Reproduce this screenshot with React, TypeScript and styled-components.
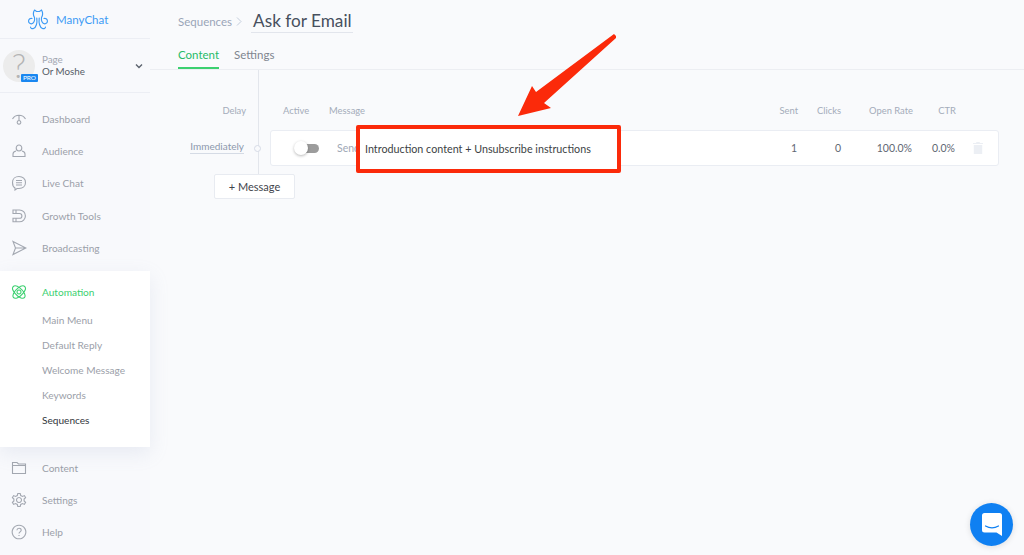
import React from "react";
import styled, { createGlobalStyle } from "styled-components";

const Global = createGlobalStyle`
  html, body { margin: 0; padding: 0; height: 100%; background: #f9fafc; }
  body { font-family: Lato, "Open Sans", "Liberation Sans", sans-serif; overflow: hidden; }
  #root { height: 100%; }
`;

const Page = styled.div`
  position: relative;
  display: flex;
  width: 1024px;
  height: 555px;
  overflow: hidden;
  background: #f9fafc;
`;

const Sidebar = styled.aside`
  width: 150px;
  flex: none;
  display: flex;
  flex-direction: column;
  background: #f8f9fc;
`;

const Brand = styled.div`
  height: 38px;
  display: flex;
  align-items: center;
  gap: 7px;
  padding-left: 27px;
  border-bottom: 1px solid #eceef4;
  color: #3d9bf5;
  font-size: 11.5px;
`;

const Account = styled.div`
  height: 53px;
  display: flex;
  align-items: center;
  padding-left: 3px;
  border-bottom: 1px solid #eceef4;
`;

const Avatar = styled.div`
  position: relative;
  width: 32px;
  height: 32px;
  border-radius: 50%;
  background: #ececec;
  color: #b4b4b4;
  display: flex;
  align-items: center;
  justify-content: center;
  font-size: 33px;
  font-weight: 300;
  line-height: 1;
  flex: none;
`;

const ProBadge = styled.span`
  position: absolute;
  right: -3px;
  bottom: 0;
  width: 17px;
  height: 8px;
  border-radius: 1px;
  background: #1a87f0;
  color: #fff;
  font-size: 6.5px;
  font-weight: 400;
  line-height: 8px;
  text-align: center;
`;

const AccountText = styled.div`
  margin-left: 7px;
  padding-bottom: 2px;
  flex: 1;
  display: flex;
  flex-direction: column;
  font-size: 9.8px;
  line-height: 12px;
`;

const AccountLabel = styled.span`
  color: #a3a8b2;
`;

const AccountName = styled.span`
  color: #565c66;
`;

const Chevron = styled.svg`
  width: 8px;
  height: 6px;
  margin-right: 7px;
  fill: none;
  stroke: #5c636e;
  stroke-width: 1.4;
`;

const NavGroup = styled.nav`
  display: flex;
  flex-direction: column;
  padding-top: 10px;
`;

const NavItem = styled.div<{ $green?: boolean }>`
  height: 32.2px;
  display: flex;
  align-items: center;
  padding-left: 11px;
  gap: 15px;
  font-size: 10.1px;
  color: ${(p) => (p.$green ? "#3cd070" : "#9ba0a9")};
  svg {
    width: 16px;
    height: 16px;
    flex: none;
    fill: none;
    stroke: ${(p) => (p.$green ? "#3cd070" : "#a2a7b0")};
    stroke-width: 1.1;
  }
`;

const ActiveBlock = styled.div`
  margin-top: 7px;
  height: 176px;
  padding-top: 5px;
  box-sizing: border-box;
  background: #fff;
  box-shadow: 0 6px 18px rgba(150, 160, 190, 0.16);
  position: relative;
`;

const SubNav = styled.div`
  display: flex;
  flex-direction: column;
  margin-top: -1px;
`;

const SubItem = styled.div<{ $current?: boolean }>`
  height: 25.2px;
  display: flex;
  align-items: center;
  padding-left: 42px;
  font-size: 10.1px;
  color: ${(p) => (p.$current ? "#33373d" : "#9ba0a9")};
`;

const LowerNav = styled.nav`
  display: flex;
  flex-direction: column;
  padding-top: 5px;
`;

const Main = styled.main`
  flex: 1;
  min-width: 0;
  display: flex;
  flex-direction: column;
`;

const Header = styled.header`
  height: 70px;
  box-sizing: border-box;
  padding: 10px 0 0 28px;
  border-bottom: 1px solid #eceef2;
`;

const Crumbs = styled.div`
  display: flex;
  align-items: center;
  height: 22px;
`;

const Crumb = styled.span`
  font-size: 11.5px;
  color: #9aa5b8;
`;

const CrumbArrow = styled.svg`
  width: 6px;
  height: 9px;
  margin: 0 9px 0 4px;
  fill: none;
  stroke: #c3ccdb;
  stroke-width: 1;
`;

const Title = styled.h1`
  margin: 0;
  padding: 0 1px 0 2px;
  font-size: 17.2px;
  font-weight: 400;
  line-height: 22px;
  color: #47505e;
  border-bottom: 1px solid #e2e5ec;
`;

const Tabs = styled.div`
  display: flex;
  gap: 15px;
  margin-top: 12px;
`;

const Tab = styled.div<{ $active?: boolean }>`
  height: 25px;
  box-sizing: border-box;
  padding-top: 4px;
  font-size: 11.5px;
  line-height: 14px;
  color: ${(p) => (p.$active ? "#27ba68" : "#7f858f")};
  border-bottom: ${(p) => (p.$active ? "2px solid #3cd070" : "none")};
`;

const Body = styled.section`
  position: relative;
  flex: 1;
  padding: 34px 25px 0 40px;
`;

const Timeline = styled.div`
  position: absolute;
  left: 108px;
  top: 0;
  width: 1px;
  height: 104px;
  background: #e3e6ec;
`;

const HeadRow = styled.div`
  display: grid;
  grid-template-columns: 56px 83px 1fr 43px 43px 72px 43px 43px;
  height: 14px;
  font-size: 9.4px;
  line-height: 14px;
  color: #a4acba;
`;

const HeadCell = styled.span<{ $align?: string; $inset?: number }>`
  text-align: ${(p) => p.$align || "left"};
  padding-left: ${(p) => p.$inset || 0}px;
`;

const Row = styled.div`
  display: flex;
  align-items: center;
  margin-top: 12px;
  height: 36px;
`;

const DelayLabel = styled.div`
  width: 54px;
  margin-bottom: 2px;
  font-size: 10px;
  line-height: 13px;
  color: #8c98ac;
  border-bottom: 1px solid #d5dbe5;
  text-align: right;
  flex: none;
`;

const Node = styled.span`
  width: 7px;
  height: 7px;
  box-sizing: border-box;
  border: 1.5px solid #d6dbe6;
  border-radius: 50%;
  background: #f9fafc;
  margin-left: 10px;
  flex: none;
  position: relative;
  z-index: 1;
`;

const Card = styled.div`
  margin-left: 9px;
  flex: 1;
  height: 36px;
  box-sizing: border-box;
  background: #fff;
  border: 1px solid #eaedf3;
  border-radius: 3px;
  display: grid;
  grid-template-columns: 66px 1fr 44px 71px 43px 43px;
  align-items: center;
  font-size: 10.5px;
  color: #5f6773;
`;

const SwitchTrack = styled.span`
  position: relative;
  width: 18px;
  height: 9px;
  margin-left: 30px;
  border-radius: 5px;
  background: #9c9c9c;
`;

const SwitchKnob = styled.span`
  position: absolute;
  left: -7px;
  top: -3px;
  width: 14px;
  height: 14px;
  border-radius: 50%;
  background: #fff;
  box-shadow: 0 1px 3px rgba(0, 0, 0, 0.28);
`;

const MessageName = styled.span`
  color: #a0a8b6;
  white-space: nowrap;
  overflow: hidden;
  width: 22px;
`;

const MessageCell = styled.div`
  display: flex;
  justify-content: space-between;
  align-items: center;
`;

const Stat = styled.span`
  text-align: right;
`;

const Trash = styled.svg`
  width: 10px;
  height: 12px;
  justify-self: end;
  margin-right: 15px;
  fill: #eceff4;
`;

const AddButton = styled.button`
  display: block;
  margin: 8px 0 0 24px;
  width: 81px;
  height: 25px;
  padding: 0;
  background: #fff;
  border: 1px solid #e8ebf1;
  border-radius: 2px;
  font: 400 11px Lato, sans-serif;
  color: #3f444c;
`;

const Highlight = styled.div`
  position: absolute;
  left: 356px;
  top: 125px;
  width: 265px;
  height: 48px;
  box-sizing: border-box;
  border: 4.5px solid #fb2a0a;
  border-radius: 2px;
  background: #fff;
  display: flex;
  align-items: center;
  padding: 0 0 1px 5px;
  font-size: 10.76px;
  color: #3c3f44;
  white-space: nowrap;
`;

const Arrow = styled.svg`
  position: absolute;
  left: 510px;
  top: 30px;
  width: 110px;
  height: 90px;
  fill: #fb2a0a;
`;

const ChatBubble = styled.div`
  position: absolute;
  right: 11px;
  bottom: 9px;
  width: 43px;
  height: 43px;
  border-radius: 50%;
  background: #0f80f2;
  box-shadow: 0 1px 6px rgba(0, 0, 0, 0.12);
  display: flex;
  align-items: center;
  justify-content: center;
  svg { width: 20px; height: 23px; }
`;

const Icon = ({ d }: { d: string }) => (
  <svg viewBox="0 0 16 16"><path d={d} /></svg>
);

const icons = {
  dashboard: "M1.500 8a7.500 7.500 0 0 1 13 0M8 4v5.500M8 9.500a1.800 1.800 0 1 0 .01 0",
  audience: "M5.200 5a2.800 3 0 1 1 5.600 0a2.800 3 0 1 1-5.600 0M5 8c-2 .5-3 1.500-3 3v2.500h12V11c0-1.500-1-2.500-3-3",
  chat: "M8 1.500c3.800 0 6.500 2.500 6.500 6s-2.700 6-6.500 6H6l-2 1.500v-2C2.300 12 1.500 10 1.500 7.500c0-3.500 2.700-6 6.500-6M5 5.500h6M5 7.800h6M5 10h6",
  growth: "M2 2h6.500a5.800 5.800 0 0 1 0 11.800H2v-3.500h6.500a2.300 2.300 0 0 0 0-4.800H2zM5 2v3.500M5 10.300v3.500",
  broadcast: "M2 1.500l13 6.500-13 6.500 2.500-6.500zM4.500 8H15",
  atom: "M8 6a2 2 0 1 0 .01 0M3 2c3-1.500 9 4 10.500 7.500 1.500 3.500 0 5.500-3.500 4.500S1 6.500 1.500 4C1.700 3 2.300 2.400 3 2M13 2c-3-1.500-9 4-10.500 7.500C1 13 2.500 15 6 14s9-7.500 8.500-10C14.300 3 13.700 2.400 13 2",
  folder: "M1.500 2.500h4.500l1.500 1.500h7v9.500h-13zM1.500 5.500h13",
  settings: "M8 5.500a2.500 2.500 0 1 0 .01 0M6.800 1.500h2.400l.5 2 1.800.9 1.900-.8 1.200 2.100-1.500 1.400v1.800l1.500 1.400-1.200 2.100-1.900-.8-1.800.9-.5 2H6.800l-.5-2-1.800-.9-1.900.8-1.200-2.100 1.500-1.400V7.100L1.400 5.700l1.200-2.100 1.900.8 1.800-.9z",
  help: "M8 1.200a6.800 6.800 0 1 0 .01 0M5.900 6.300C6 5 7 4.300 8 4.300c1.300 0 2.200.8 2.200 1.900 0 1.700-2.200 1.700-2.200 3.400M8 11v1",
};

export default function App() {
  return (
    <Page>
      <Global />
      <Sidebar>
        <Brand>
          <svg width="22" height="21" viewBox="0 0 22 21" fill="none" stroke="#3d9bf5" strokeWidth="1.150" strokeLinecap="round">
            <path d="M7.500 1l2 1.500h3l2-1.500c1.500 2.500 1.500 5 0 7.500M7.500 1C6 3.500 6 6 7.500 8.500" />
            <path d="M7.500 8.500C8 11.500 6.800 14.800 4.300 14.800a2.700 2.700 0 1 1 .7-5.300" />
            <path d="M14.500 8.500c-.5 3 .7 6.300 3.200 6.300a2.700 2.700 0 1 0-.7-5.300" />
            <path d="M9.800 9c.5 4.500-.3 9-3.300 10.500-1.500.5-3-.3-3-1.500" />
            <path d="M12.200 9c-.5 4.500.3 9 3.300 10.500 1.500.5 3-.3 3-1.500" />
          </svg>
          <span>ManyChat</span>
        </Brand>
        <Account>
          <Avatar>
            ?
            <ProBadge>PRO</ProBadge>
          </Avatar>
          <AccountText>
            <AccountLabel>Page</AccountLabel>
            <AccountName>Or Moshe</AccountName>
          </AccountText>
          <Chevron viewBox="0 0 8 6"><path d="M1 1.500l3 3 3-3" /></Chevron>
        </Account>
        <NavGroup>
          <NavItem><Icon d={icons.dashboard} />Dashboard</NavItem>
          <NavItem><Icon d={icons.audience} />Audience</NavItem>
          <NavItem><Icon d={icons.chat} />Live Chat</NavItem>
          <NavItem><Icon d={icons.growth} />Growth Tools</NavItem>
          <NavItem><Icon d={icons.broadcast} />Broadcasting</NavItem>
        </NavGroup>
        <ActiveBlock>
          <NavItem $green><Icon d={icons.atom} />Automation</NavItem>
          <SubNav>
            <SubItem>Main Menu</SubItem>
            <SubItem>Default Reply</SubItem>
            <SubItem>Welcome Message</SubItem>
            <SubItem>Keywords</SubItem>
            <SubItem $current>Sequences</SubItem>
          </SubNav>
        </ActiveBlock>
        <LowerNav>
          <NavItem><Icon d={icons.folder} />Content</NavItem>
          <NavItem><Icon d={icons.settings} />Settings</NavItem>
          <NavItem><Icon d={icons.help} />Help</NavItem>
        </LowerNav>
      </Sidebar>
      <Main>
        <Header>
          <Crumbs>
            <Crumb>Sequences</Crumb>
            <CrumbArrow viewBox="0 0 6 9"><path d="M1 .5l4 4-4 4" /></CrumbArrow>
            <Title>Ask for Email</Title>
          </Crumbs>
          <Tabs>
            <Tab $active>Content</Tab>
            <Tab>Settings</Tab>
          </Tabs>
        </Header>
        <Body>
          <Timeline />
          <HeadRow>
            <HeadCell $align="right">Delay</HeadCell>
            <HeadCell $inset={37}>Active</HeadCell>
            <HeadCell>Message</HeadCell>
            <HeadCell $align="right">Sent</HeadCell>
            <HeadCell $align="right">Clicks</HeadCell>
            <HeadCell $align="right">Open Rate</HeadCell>
            <HeadCell $align="right">CTR</HeadCell>
            <span />
          </HeadRow>
          <Row>
            <DelayLabel>Immediately</DelayLabel>
            <Node />
            <Card>
              <SwitchTrack><SwitchKnob /></SwitchTrack>
              <MessageCell>
                <MessageName>Send</MessageName>
                <Stat>1</Stat>
              </MessageCell>
              <Stat>0</Stat>
              <Stat>100.0%</Stat>
              <Stat>0.0%</Stat>
              <Trash viewBox="0 0 10 12"><path d="M3.500 0h3l.5 1h3v1H0V1h3zM.8 3h8.400v9H.8z" /></Trash>
            </Card>
          </Row>
          <AddButton>+ Message</AddButton>
        </Body>
      </Main>
      <Highlight>Introduction content + Unsubscribe instructions</Highlight>
      <Arrow viewBox="0 0 110 90">
        <path d="M106 6 L104 4 L26 62 L22 56 L8 86 L41 78 L34 73 L106 8 Z" />
      </Arrow>
      <ChatBubble>
        <svg viewBox="0 0 20 23">
          <path fill="#fff" d="M2.500 0h15A2.500 2.500 0 0 1 20 2.500V23l-5.500-3.500h-12A2.500 2.500 0 0 1 0 17V2.500A2.500 2.500 0 0 1 2.500 0z" />
          <path fill="none" stroke="#0f80f2" strokeWidth="1.200" strokeLinecap="round" d="M3.500 13c4 2.200 9 2.200 13 0" />
        </svg>
      </ChatBubble>
    </Page>
  );
}
